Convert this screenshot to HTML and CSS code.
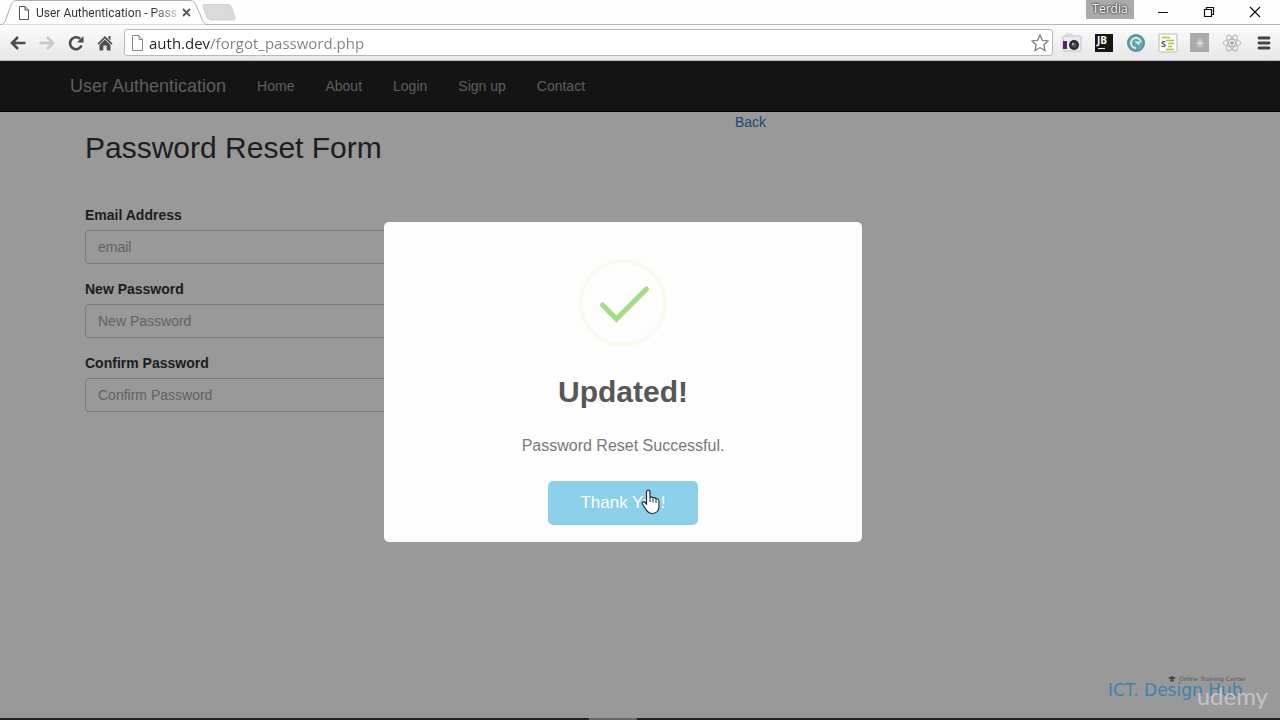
FILE: index.html
```html
<!DOCTYPE html>
<html lang="en">
<head>
<title>User Authentication - Password Reset</title>
<meta charset="utf-8">
<meta name="viewport" content="width=device-width, initial-scale=1">
    <link rel="stylesheet" href="styles.css">
</head>
<body>
    <div class="tabstrip">
        <div class="tab">
            <svg class="tab-shape" width="208" height="25" viewBox="0 0 208 25">
                <path d="M0 24.5C4 24.5 5 22 6 19L11 5C12.500 1.500 14 .5 17 .5H189C193 .5 194.500 2 196 5L202 19C203.500 23 205 24.500 208 24.500" fill="#fefefe" stroke="#b0b0b0"/>
            </svg>
            <svg class="file-icon" width="12" height="14" viewBox="0 0 12 14" fill="#fff" stroke="#555">
                <path d="M1.500 .5H7L10.500 4V13.500H1.500ZM7 .5V4H10.500"/>
            </svg>
            <span class="tab-title">User Authentication - Pass</span>
            <button type="button" class="tab-close" aria-label="Close tab">
                <svg width="9" height="9" viewBox="0 0 9 9" stroke="#555" stroke-width="1.800"><path d="M1 1L8 8M8 1L1 8"/></svg>
            </button>
        </div>
        <button type="button" class="new-tab" aria-label="New tab">
            <svg width="34" height="17" viewBox="0 0 34 17"><path d="M3 .5H26C28 .5 29 1.500 30 4L33 13C33.500 15 33 16 31 16H9C7 16 6 15 5 13L1 3C.5 1.500 1 .5 3 .5Z" fill="#d9dadc" stroke="#d0d1d3"/></svg>
        </button>
        <div class="window-controls">
            <span class="user-badge">Terdia</span>
            <button type="button" aria-label="Minimize">
                <svg width="12" height="12" viewBox="0 0 12 12" stroke="#111"><path d="M1 6.500H11"/></svg>
            </button>
            <button type="button" aria-label="Restore">
                <svg width="12" height="12" viewBox="0 0 12 12" fill="none" stroke="#111" stroke-width="1.200"><path d="M1.500 3.500H8.500V10.500H1.500ZM3.500 3.500V1.500H10.500V8.500H8.500"/></svg>
            </button>
            <button type="button" aria-label="Close">
                <svg width="12" height="12" viewBox="0 0 12 12" stroke="#111" stroke-width="1.200"><path d="M1 1L11 11M11 1L1 11"/></svg>
            </button>
        </div>
    </div>

    <div class="toolbar">
        <button type="button" aria-label="Back">
            <svg width="16" height="14" viewBox="0 0 16 14" fill="none" stroke="#4d4d4d" stroke-width="2.600"><path d="M15.500 7H2.500M8 1L2 7L8 13"/></svg>
        </button>
        <button type="button" aria-label="Forward">
            <svg width="16" height="14" viewBox="0 0 16 14" fill="none" stroke="#c8c8c8" stroke-width="2.600"><path d="M.5 7H13.500M8 1L14 7L8 13"/></svg>
        </button>
        <button type="button" aria-label="Reload">
            <svg width="16" height="16" viewBox="0 0 16 16"><path d="M13.600 10.600A6 6 0 1 1 12.200 3.800" fill="none" stroke="#4d4d4d" stroke-width="2.600"/><path d="M15.500 1V7.500H9Z" fill="#4d4d4d"/></svg>
        </button>
        <button type="button" aria-label="Home">
            <svg width="16" height="16" viewBox="0 0 16 16" fill="#4d4d4d"><path d="M8 1L15.500 8.500L14.300 9.700L8 3.600L1.700 9.700L.5 8.500ZM11.500 1H13.500V5.500L11.500 3.500ZM8 4.600L13.500 10V15.500H9.700V10.500H6.300V15.500H2.500V10Z"/></svg>
        </button>
        <div class="address">
            <svg class="file-icon" width="13" height="16" viewBox="0 0 13 16" fill="#fff" stroke="#888">
                <path d="M1.500 .5H8L11.500 4.500V15.500H1.500ZM8 .5V4.500H11.500"/>
            </svg>
            <input type="text" class="url" aria-label="Address" value="auth.dev/forgot_password.php">
            <button type="button" aria-label="Bookmark">
                <svg width="18" height="18" viewBox="0 0 18 18" fill="#fff" stroke="#777" stroke-width="1.200"><path d="M9 1L11.400 6.300L17 6.900L12.800 10.700L14 16.500L9 13.600L4 16.500L5.200 10.700L1 6.900L6.600 6.300Z"/></svg>
            </button>
        </div>
        <div class="extensions">
            <button type="button" aria-label="Screenshot">
                <svg width="20" height="20" viewBox="0 0 20 20"><path d="M4 1H10V4H4Z" fill="#f4f4f4" stroke="#ccc"/><rect x="1" y="3" width="18" height="15" rx="1" fill="#eceaee" stroke="#c5c2c8"/><rect x="1" y="8" width="4" height="8" fill="#4e2a70"/><circle cx="12" cy="12" r="5" fill="#2b2b30"/><circle cx="12" cy="12" r="2.500" fill="#56555c"/><circle cx="11" cy="11" r="1" fill="#ccc"/></svg>
            </button>
            <button type="button" aria-label="JetBrains">
                <svg width="18" height="18" viewBox="0 0 18 18"><rect width="18" height="18" fill="#161616"/><text class="jb" x="2" y="10">JB</text><rect x="3" y="14" width="7" height="1" fill="#eee"/></svg>
            </button>
            <button type="button" aria-label="Refresh">
                <svg width="20" height="20" viewBox="0 0 20 20"><circle cx="10" cy="10" r="9" fill="#5b8b92"/><circle cx="10" cy="10" r="7.500" fill="#62a5aa"/><path d="M10 15A5 5 0 1 1 15 9.500" fill="none" stroke="#d5ecec" stroke-width="2"/><path d="M8.500 8.500H13.500V12.500Z" fill="#e4f3f3"/></svg>
            </button>
            <button type="button" aria-label="Source">
                <svg width="20" height="20" viewBox="0 0 20 20"><rect x="1" y="1" width="18" height="18" rx="1" fill="#fbfbfb" stroke="#bbb"/><path d="M4 4.500H12M8 7.500H16M10 10.500H16M10 13.500H14M8 16.500H16" stroke="#a8c832" stroke-width="1.400"/><text class="src" x="3" y="14">S</text></svg>
            </button>
            <button type="button" aria-label="React inspector">
                <svg width="20" height="20" viewBox="0 0 20 20"><rect width="19" height="19" fill="#aaa"/><g fill="none" stroke="#c4c4c4"><ellipse cx="10" cy="10" rx="4" ry="2"/><ellipse cx="10" cy="10" rx="4" ry="2" transform="rotate(60 10 10)"/><ellipse cx="10" cy="10" rx="4" ry="2" transform="rotate(120 10 10)"/></g><circle cx="10" cy="10" r="1.500" fill="#eee"/></svg>
            </button>
            <button type="button" aria-label="React tools">
                <svg width="20" height="20" viewBox="0 0 20 20" fill="none" stroke="#b4b4b4"><ellipse cx="10" cy="10" rx="9" ry="3.500"/><ellipse cx="10" cy="10" rx="9" ry="3.500" transform="rotate(60 10 10)"/><ellipse cx="10" cy="10" rx="9" ry="3.500" transform="rotate(120 10 10)"/><circle cx="10" cy="10" r="1.500" fill="#aaa"/></svg>
            </button>
            <button type="button" aria-label="Menu">
                <svg width="14" height="14" viewBox="0 0 14 14" stroke="#444" stroke-width="2.800" stroke-linecap="round"><path d="M2 2H12M2 7H12M2 12H12"/></svg>
            </button>
        </div>
    </div>

    <div class="page">
        <nav class="navbar">
            <div class="container">
                <a class="brand" href="index.php">User Authentication</a>
                <a href="index.php">Home</a>
                <a href="#">About</a>
                <a href="login.php">Login</a>
                <a href="signup.php">Sign up</a>
                <a href="#">Contact</a>
            </div>
        </nav>
        <main class="container">
            <section class="form-column">
                <h2>Password Reset Form</h2>
                <form action="" method="post">
                    <div class="form-group">
                        <label for="email">Email Address</label>
                        <input type="text" id="email" name="email" placeholder="email">
                    </div>
                    <div class="form-group">
                        <label for="newPassword">New Password</label>
                        <input type="password" id="newPassword" name="new_password" placeholder="New Password">
                    </div>
                    <div class="form-group">
                        <label for="confirmPassword">Confirm Password</label>
                        <input type="password" id="confirmPassword" name="confirm_password" placeholder="Confirm Password">
                    </div>
                </form>
            </section>
            <p class="back"><a href="index.php">Back</a></p>
        </main>

        <div class="overlay"></div>

        <div class="alert" role="dialog" aria-labelledby="alertTitle">
            <svg class="alert-icon" width="88" height="88" viewBox="0 0 88 88" fill="none">
                <circle cx="44" cy="44" r="42" stroke="#f8f9ef" stroke-width="4"/>
                <path d="M23.500 46L37.500 60L67.500 30" stroke="#a5dc86" stroke-width="5" stroke-linecap="round"/>
            </svg>
            <h2 id="alertTitle">Updated!</h2>
            <p>Password Reset Successful.</p>
            <button type="button" class="confirm">
                Thank You!
                <svg class="pointer" width="20" height="26" viewBox="0 0 20 26"><path d="M5.500 15V3C5.500 .5 9 .5 9 3V9C9 7.500 12 7.500 12 9.500C12 8 15 8.500 15 10.500C15.500 9.200 18 9.800 18 12V17C18 21 16 24.500 11.500 24.500C8 24.500 6.500 23 5 20.500L1.500 15C.5 13 3 12 4 13.500Z" fill="#fff" stroke="#1d2a36" stroke-width="1.200"/><path d="M9 9V13M12 10V13.500M15 11V14" stroke="#1d2a36"/></svg>
            </button>
        </div>

        <div class="watermark">
            <small>
                <svg width="8" height="6" viewBox="0 0 8 6"><path d="M4 0L8 2L4 4L0 2ZM2 3.500L4 4.500L6 3.500V5L4 6L2 5Z" fill="#444"/></svg>
                Online Training Center
            </small>
            <span class="hub">ICT. Design Hub</span>
            <span class="udemy">udemy</span>
        </div>
    </div>
    <div class="taskbar"><span></span></div>
</body>
</html>
```
FILE: styles.css
```css
* {
    box-sizing: border-box;
}
body {
    display: flex;
    flex-direction: column;
    min-height: 100vh;
    margin: 0;
    font-family: "Liberation Sans", Arial, sans-serif;
    font-size: 14px;
    line-height: 20px;
    color: #333;
    background-color: #fff;
}
a {
    color: #337ab7;
    text-decoration: none;
}
svg {
    display: block;
    flex: none;
}
button {
    display: flex;
    align-items: center;
    justify-content: center;
    padding: 0;
    border: none;
    background: none;
    cursor: pointer;
}

/* browser window */
.tabstrip {
    display: flex;
    height: 25px;
    background-color: #fefefe;
    border-bottom: 1px solid #b8b8b8;
}
.tab {
    position: relative;
    display: flex;
    align-items: center;
    width: 202px;
    height: 25px;
    padding-left: 18px;
}
.tab-shape {
    position: absolute;
    top: 0;
    left: 0;
}
.tab .file-icon,
.tab-title,
.tab-close {
    position: relative;
}
.tab-title {
    width: 142px;
    margin: 0 4px 0 6px;
    white-space: nowrap;
    font: 12px Roboto, sans-serif;
    color: transparent;
    background: linear-gradient(to right, #333 116px, #ccc);
    -webkit-background-clip: text;
    background-clip: text;
}
.new-tab {
    height: 25px;
}
.window-controls {
    display: flex;
    height: 24px;
    margin-left: auto;
    margin-right: 2px;
}
.window-controls button {
    width: 46px;
}
.user-badge {
    width: 48px;
    height: 19px;
    margin-right: 6px;
    background-color: #aaa;
    color: #fff;
    font: 12px/18px "Open Sans", sans-serif;
    text-align: center;
    text-shadow: 0 0 2px #222, 0 0 2px #222;
}
.toolbar {
    display: flex;
    align-items: center;
    height: 36px;
    padding: 0 6px 0 8px;
    background: linear-gradient(#fcfcfc, #e6e6e6);
    border-bottom: 1px solid #bbb;
}
.toolbar > button {
    width: 20px;
    margin-right: 9px;
}
.address {
    display: flex;
    flex: 1;
    align-items: center;
    height: 27px;
    padding: 0 3px 0 6px;
    background-color: #fff;
    border: 1px solid #b8b8b8;
    border-radius: 3px;
}
.url {
    flex: 1;
    margin-left: 5px;
    padding: 0;
    border: none;
    outline: none;
    font: 15px "Open Sans", sans-serif;
    color: transparent;
    background: linear-gradient(to right, #222 61px, #808080 61px);
    -webkit-background-clip: text;
    background-clip: text;
}
.extensions {
    display: flex;
    align-items: center;
    gap: 12px;
    margin-left: 9px;
}
.extensions button {
    width: 20px;
}
.jb {
    font: bold 10px "Open Sans", sans-serif;
    fill: #fff;
}
.src {
    font: bold 9px "Open Sans", sans-serif;
    fill: #555;
}

/* page */
.page {
    position: relative;
    flex: 1;
}
.container {
    display: flex;
    max-width: 1170px;
    margin: 0 auto;
    padding: 0 15px;
}
.navbar {
    background-color: #222;
    border-bottom: 1px solid #080808;
}
.navbar .container {
    align-items: center;
    gap: 31px;
    height: 50px;
}
.navbar a {
    color: #9d9d9d;
}
.navbar .brand {
    font-size: 18px;
}
.form-column {
    width: 58.3333%;
    padding: 0 15px;
}
.form-column h2 {
    margin: 19px 0 41px;
    font-size: 30px;
    font-weight: normal;
    line-height: 33px;
}
.form-group {
    margin-bottom: 15px;
}
.form-group label {
    display: block;
    margin-bottom: 5px;
    font-weight: bold;
}
.form-group input {
    display: block;
    width: 100%;
    height: 34px;
    padding: 6px 12px;
    border: 1px solid #ccc;
    border-radius: 4px;
    font: inherit;
}
.form-group input::placeholder {
    color: #a4a4a4;
}
.back {
    margin: 0;
}
.overlay {
    position: absolute;
    inset: 0;
    background-color: rgba(0, 0, 0, 0.4);
}
.alert {
    position: absolute;
    top: 50%;
    left: 50%;
    width: 478px;
    margin: -168px 0 0 -256px;
    padding: 17px;
    background-color: #fdfdfd;
    border-radius: 5px;
    text-align: center;
}
.alert-icon {
    margin: 20px auto 25px;
}
.alert h2 {
    margin: 0 0 25px;
    font-size: 30px;
    line-height: 40px;
    color: #575757;
}
.alert p {
    margin: 0 0 26px;
    font-size: 16px;
    line-height: 18px;
    color: #797979;
}
.confirm {
    position: relative;
    height: 44px;
    margin: 0 auto;
    padding: 0 32px;
    border-radius: 5px;
    background-color: #8cd0ea;
    color: #fff;
    font: 17px "Liberation Sans", Arial, sans-serif;
}
.pointer {
    position: absolute;
    top: 8px;
    right: 37px;
}

/* logos in the corner lie over each other */
.watermark {
    position: absolute;
    right: 12px;
    bottom: 6px;
    width: 160px;
    height: 40px;
}
.watermark small {
    position: absolute;
    top: 1px;
    right: 22px;
    display: flex;
    align-items: center;
    gap: 3px;
    font: 6px/12px "DejaVu Sans", sans-serif;
    color: #555;
    white-space: nowrap;
}
.hub {
    position: absolute;
    top: 8px;
    left: 0;
    font: 17px/20px "DejaVu Sans", sans-serif;
    color: #3f83ab;
    white-space: nowrap;
}
.udemy {
    position: absolute;
    right: 0;
    bottom: 2px;
    font: 24px/28px Lato, sans-serif;
    color: #c4c4c4;
}
.taskbar {
    height: 2px;
    background-color: #242226;
}
.taskbar span {
    display: block;
    width: 48px;
    height: 2px;
    margin-left: 46%;
    background-color: #666;
}
```
